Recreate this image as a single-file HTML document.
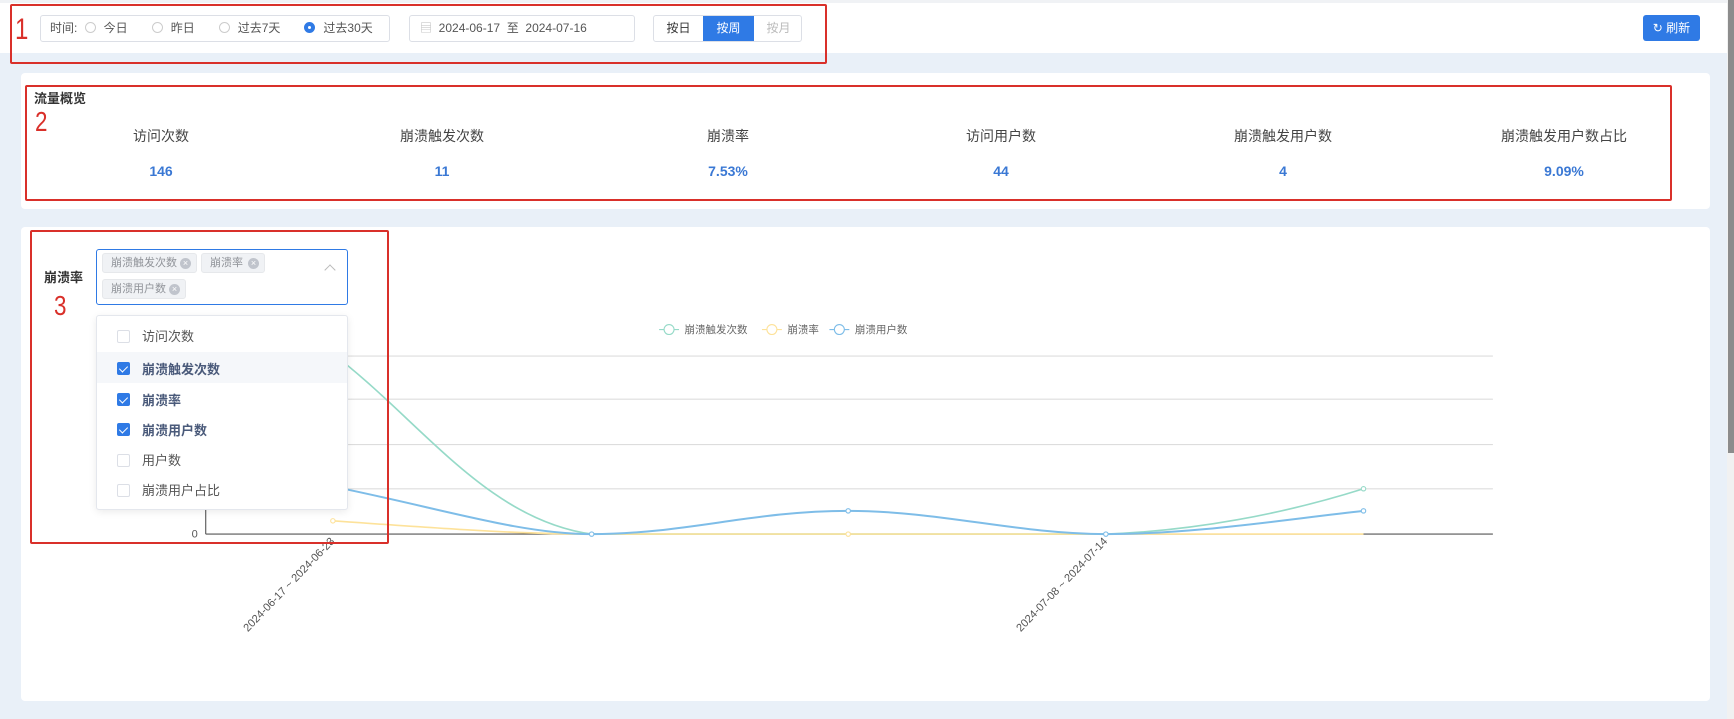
<!DOCTYPE html>
<html><head><meta charset="utf-8"><style>
*{box-sizing:border-box;margin:0;padding:0}
body{width:1734px;height:719px;overflow:hidden;background:#e9f0f8;font-family:"Liberation Sans","Noto Sans CJK SC",sans-serif;color:#333;position:relative}
.abs{position:absolute}
.hdr{left:0;top:0;width:1727px;height:53px;background:#fff;border-top:3px solid #f0f2f5}
.box{border:1px solid #dcdfe6;border-radius:3px;background:#fff}
.red{border:2px solid #d9302a;border-radius:2px}
.radio{display:inline-block;width:11px;height:11px;border:1px solid #ccc;border-radius:50%;vertical-align:-1px;margin-right:8px}
.card{background:#fff;border-radius:4px}
.lbl{font-size:14px;color:#444;text-align:center;width:200px;margin-left:-100px}
.val{font-size:14px;color:#3a78d4;font-weight:bold;text-align:center;width:200px;margin-left:-100px}
.tag{background:#f0f2f5;border:1px solid #e6e8eb;border-radius:3px;font-size:11px;color:#909399;height:20px;line-height:18px;padding-left:8px}
.tag i{position:absolute;right:5px;top:4px;width:11px;height:11px;border-radius:50%;background:#c0c4cc;color:#fff;font-style:normal;font-size:9px;line-height:11px;text-align:center}
.cb{width:13px;height:13px;border:1px solid #dcdfe6;border-radius:2px;left:20px}
.cb.on{background:#2f7ae5;border-color:#2f7ae5}
.cb.on::after{content:"";position:absolute;left:3px;top:1px;width:4px;height:7px;border-right:1px solid #fff;border-bottom:1px solid #fff;transform:rotate(45deg)}
.it{font-size:13px;left:45px;color:#555}
.it.on{color:#4a5a7a;font-weight:bold}
</style></head><body>
<div class="abs hdr"></div>
<div class="abs" style="left:1727px;top:0;width:7px;height:719px;background:#f1f1f1"></div>
<div class="abs" style="left:1728px;top:0;width:6px;height:453px;background:#8c8c8c"></div>

<div class="abs red" style="left:10px;top:4px;width:817px;height:60px"></div>
<div class="abs" style="left:15px;top:10px;font-size:30px;color:#d9302a;line-height:40px;transform:scaleX(0.8);transform-origin:left">1</div>
<div class="abs box" style="left:40px;top:15px;width:350px;height:27px;font-size:12px;color:#555;line-height:25px;padding-left:9px;white-space:nowrap">
时间: <span class="radio" style="margin-left:4px"></span>今日<span class="radio" style="margin-left:24px"></span>昨日<span class="radio" style="margin-left:24px"></span>过去7天<span class="radio" style="margin-left:24px;border:4px solid #2f7ae5"></span>过去30天</div>
<div class="abs box" style="left:409px;top:15px;width:226px;height:27px;font-size:12px;color:#555;line-height:25px;padding-left:10px">
<span style="color:#bbb">▤</span>&nbsp; 2024-06-17 &nbsp;至&nbsp; 2024-07-16</div>
<div class="abs box" style="left:653px;top:15px;width:149px;height:27px;font-size:12px;line-height:25px;overflow:hidden">
<span class="abs" style="left:0;width:49px;text-align:center;color:#333">按日</span>
<span class="abs" style="left:49px;width:51px;text-align:center;background:#2f7ae5;color:#fff;height:27px">按周</span>
<span class="abs" style="left:100px;width:49px;text-align:center;color:#bbb">按月</span></div>
<div class="abs" style="left:1643px;top:15px;width:57px;height:26px;background:#2f7ae5;border-radius:3px;color:#fff;font-size:12px;line-height:26px;text-align:center">↻ 刷新</div>

<div class="abs card" style="left:21px;top:73px;width:1689px;height:136px"></div>
<div class="abs red" style="left:25px;top:85px;width:1647px;height:116px"></div>
<div class="abs" style="left:34px;top:88px;font-size:13px;font-weight:bold;color:#333">流量概览</div>
<div class="abs" style="left:35px;top:106px;font-size:28px;color:#d9302a;transform:scaleX(0.8);transform-origin:left">2</div>
<div class="abs lbl" style="left:161px;top:126px">访问次数</div><div class="abs val" style="left:161px;top:163px">146</div>
<div class="abs lbl" style="left:442px;top:126px">崩溃触发次数</div><div class="abs val" style="left:442px;top:163px">11</div>
<div class="abs lbl" style="left:728px;top:126px">崩溃率</div><div class="abs val" style="left:728px;top:163px">7.53%</div>
<div class="abs lbl" style="left:1001px;top:126px">访问用户数</div><div class="abs val" style="left:1001px;top:163px">44</div>
<div class="abs lbl" style="left:1283px;top:126px">崩溃触发用户数</div><div class="abs val" style="left:1283px;top:163px">4</div>
<div class="abs lbl" style="left:1564px;top:126px">崩溃触发用户数占比</div><div class="abs val" style="left:1564px;top:163px">9.09%</div>

<div class="abs card" style="left:21px;top:227px;width:1689px;height:474px"></div>
<svg class="abs" style="left:0;top:0" width="1734" height="719" viewBox="0 0 1568 650.2">
<g stroke="#ddd" stroke-width="1"><line x1="186" y1="322" x2="1350" y2="322"/><line x1="186" y1="361" x2="1350" y2="361"/><line x1="186" y1="402" x2="1350" y2="402"/><line x1="186" y1="442" x2="1350" y2="442"/></g>
<line x1="186" y1="483" x2="1350" y2="483" stroke="#555"/>
<line x1="186" y1="300" x2="186" y2="483" stroke="#555"/>
<text x="176" y="486" font-size="10" fill="#555" text-anchor="middle" font-family="Liberation Sans">0</text>
<path d="M301 320 C380 380,440 470,535 483 L767 483 L1000 483 C1080 480,1160 465,1233 442" fill="none" stroke="#96dac8" stroke-width="1.5"/>
<path d="M301 471 C400 478,470 483,535 483 L1233 483" fill="none" stroke="#fde29a" stroke-width="1.5"/>
<path d="M301 440 C400 460,470 483,535 483 C620 483,680 462,767 462 C850 462,920 483,1000 483 C1080 483,1160 470,1233 462" fill="none" stroke="#7ebde8" stroke-width="1.8"/>
<g fill="#fff" stroke-width="1"><circle cx="535" cy="483" r="2" stroke="#7ebde8"/><circle cx="767" cy="462" r="2" stroke="#7ebde8"/><circle cx="1000" cy="483" r="2" stroke="#7ebde8"/><circle cx="1233" cy="442" r="2" stroke="#96dac8"/><circle cx="1233" cy="462" r="2" stroke="#7ebde8"/><circle cx="301" cy="471" r="2" stroke="#fde29a"/><circle cx="767" cy="483" r="2" stroke="#fde29a"/></g>
<g font-family="Liberation Sans" font-size="10" fill="#555" text-anchor="end">
<text transform="translate(303,490) rotate(-46)">2024-06-17 ~ 2024-06-23</text>
<text transform="translate(1002,490) rotate(-46)">2024-07-08 ~ 2024-07-14</text></g>
<g font-family="Liberation Sans,Noto Sans CJK SC,sans-serif" font-size="9.5" fill="#666">
<line x1="596" y1="298" x2="614" y2="298" stroke="#96dac8"/><circle cx="605" cy="298" r="4.5" fill="#fff" stroke="#96dac8"/><text x="619" y="301">崩溃触发次数</text>
<line x1="689" y1="298" x2="707" y2="298" stroke="#fde29a"/><circle cx="698" cy="298" r="4.5" fill="#fff" stroke="#fde29a"/><text x="712" y="301">崩溃率</text>
<line x1="750" y1="298" x2="768" y2="298" stroke="#7ebde8"/><circle cx="759" cy="298" r="4.5" fill="#fff" stroke="#7ebde8"/><text x="773" y="301">崩溃用户数</text></g>
</svg>

<div class="abs red" style="left:30px;top:230px;width:359px;height:314px"></div>
<div class="abs" style="left:44px;top:267px;font-size:13px;font-weight:bold;color:#333">崩溃率</div>
<div class="abs" style="left:54px;top:290px;font-size:28px;color:#d9302a;transform:scaleX(0.8);transform-origin:left">3</div>
<div class="abs" style="left:96px;top:249px;width:252px;height:56px;border:1px solid #2f7ae5;border-radius:3px;background:#fff"></div>
<div class="abs tag" style="left:102px;top:253px;width:95px">崩溃触发次数<i>×</i></div>
<div class="abs tag" style="left:201px;top:253px;width:64px">崩溃率<i>×</i></div>
<div class="abs tag" style="left:102px;top:279px;width:84px">崩溃用户数<i>×</i></div>
<div class="abs" style="left:326px;top:266px;width:8px;height:8px;border-left:1px solid #bbb;border-top:1px solid #bbb;transform:rotate(45deg)"></div>
<div class="abs" style="left:96px;top:315px;width:252px;height:195px;background:#fff;border:1px solid #e4e7ed;border-radius:3px;box-shadow:0 2px 8px rgba(0,0,0,.08)">
<div class="abs" style="left:0;top:36px;width:250px;height:31px;background:#f5f7fa"></div>
<div class="abs cb" style="top:14px"></div><div class="abs it" style="top:10px">访问次数</div>
<div class="abs cb on" style="top:46px"></div><div class="abs it on" style="top:43px">崩溃触发次数</div>
<div class="abs cb on" style="top:77px"></div><div class="abs it on" style="top:74px">崩溃率</div>
<div class="abs cb on" style="top:107px"></div><div class="abs it on" style="top:104px">崩溃用户数</div>
<div class="abs cb" style="top:138px"></div><div class="abs it" style="top:134px">用户数</div>
<div class="abs cb" style="top:168px"></div><div class="abs it" style="top:164px">崩溃用户占比</div>
</div>
</body></html>
